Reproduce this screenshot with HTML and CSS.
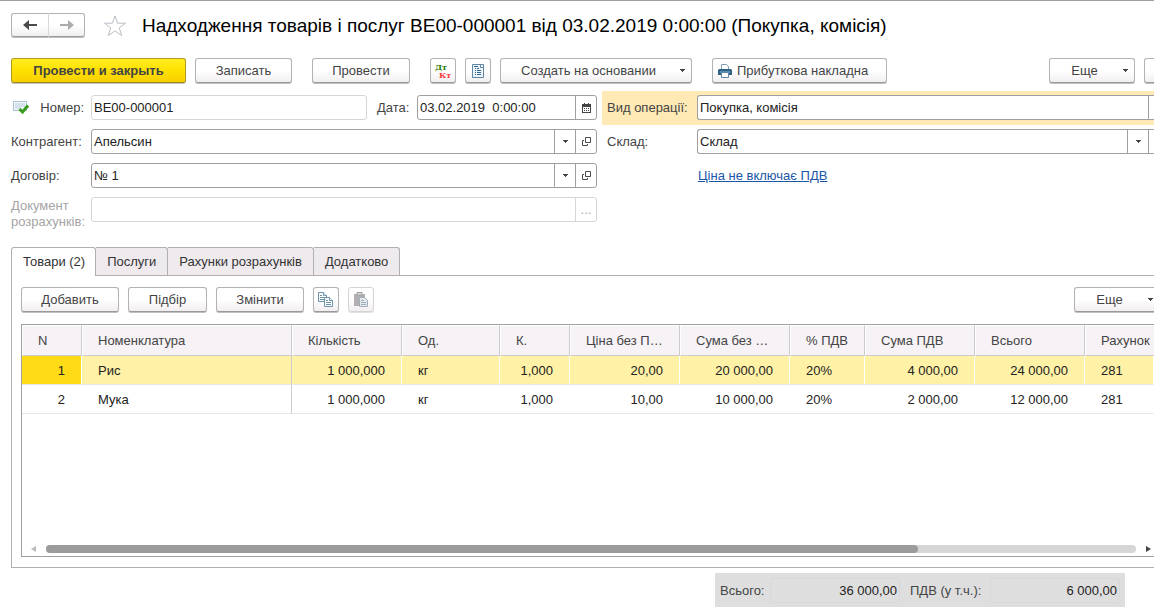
FILE: index.html
```html
<!DOCTYPE html>
<html lang="uk">
<head>
<meta charset="utf-8">
<title>Надходження товарів і послуг</title>
<link rel="stylesheet" href="styles.css">
</head>
<body>
<svg class="defs" aria-hidden="true">
  <symbol id="open" viewBox="0 0 9 9"><path d="M3.500.5h5v5h-5zM2 3.500H.5v5h5V7" fill="none" stroke="#4a4a4a"/></symbol>
  <symbol id="caret" viewBox="0 0 5 3"><path d="M0 0h5v1H4v1H3v1H2V2H1V1H0z" fill="#444"/></symbol>
</svg>
<main class="page">
  <header class="heading">
    <div class="nav">
      <button type="button" class="btn" aria-label="Назад"><svg width="14" height="12" viewBox="0 0 14 12"><path d="M0 6l6-5v4h8v2H6v4z" fill="#4a4a4a"/></svg></button>
      <button type="button" class="btn" aria-label="Вперед"><svg width="14" height="12" viewBox="0 0 14 12"><path d="M14 6L8 1v4H0v2h8v4z" fill="#acacac"/></svg></button>
    </div>
    <svg class="star" width="24" height="24" viewBox="0 0 24 24"><path d="M12 2l2.600 7.200H22.500l-6.200 4.700 2.400 7.600L12 17l-6.700 4.500 2.400-7.600L1.500 9.200h7.900z" fill="none" stroke="#b9bfc6"/></svg>
    <h1>Надходження товарів і послуг ВЕ00-000001 від 03.02.2019 0:00:00 (Покупка, комісія)</h1>
  </header>

  <div class="toolbar">
    <button type="button" class="btn primary">Провести и закрыть</button>
    <button type="button" class="btn w97">Записать</button>
    <button type="button" class="btn w98 apart">Провести</button>
    <button type="button" class="btn icon apart" aria-label="Дт Кт"><svg width="18" height="18" viewBox="0 0 18 18" font-family="DejaVu Serif, serif" font-weight="700" font-size="8"><text x="1" y="8" fill="#1c7a00">Дт</text><text x="5" y="16" fill="#f83c3c">Кт</text></svg></button>
    <button type="button" class="btn icon" aria-label="Звіт"><svg width="12" height="14" viewBox="0 0 12 14"><path d="M.5.5h11v13H.5z" fill="#eef5fa" stroke="#5f87a5"/><path d="M8.500.5v3h3" fill="#fff" stroke="#5f87a5"/><path d="M2 2.500h4M3 4.500h1m1 0h2M3 6.500h1m1 0h4M3 8.500h1m1 0h4M3 10.500h1m1 0h4" stroke="#31658a"/></svg></button>
    <button type="button" class="btn w192 menu"><span>Создать на основании</span><svg width="5" height="3"><use href="#caret"/></svg></button>
    <button type="button" class="btn w175 apart print"><svg width="14" height="14" viewBox="0 0 14 14"><path d="M3.500 5V.5h5l2 2V5" fill="#fff" stroke="#7e9db3"/><path d="M0 6l1-1h12l1 1v5H0z" fill="#2f6487"/><path d="M2 7h10v2H2z" fill="#5b8cad"/><path d="M3.500 8.500h7v5h-7z" fill="#fff" stroke="#5f87a5"/></svg><span>Прибуткова накладна</span></button>
    <button type="button" class="btn w86 menu push"><span>Еще</span><svg width="5" height="3"><use href="#caret"/></svg></button>
    <button type="button" class="btn cut" aria-label="Довідка"></button>
  </div>

  <form class="form">
    <div class="column">
      <div class="row">
        <div class="label posted"><svg width="16" height="14" viewBox="0 0 16 14"><path d="M.5 1.500h13v9H.5z" fill="#f2f7fb" stroke="#a9c0d2"/><path d="M2 4h10M2 6h10M2 8h6" stroke="#b5cddd"/><path d="M6.500 9l3 3L15 5.500" fill="none" stroke="#3a9c1e" stroke-width="3"/></svg><label for="num">Номер:</label></div>
        <div class="field pale grow"><input id="num" value="ВЕ00-000001"></div>
        <label class="datelabel" for="date">Дата:</label>
        <div class="field date"><input id="date" value="03.02.2019  0:00:00"><button type="button" aria-label="Календар"><svg width="9" height="10" viewBox="0 0 9 10"><path d="M0 1h2V0h1v1h3V0h1v1h2v9H0z" fill="#444"/><path d="M1 4h7v5H1z" fill="#fff"/><path d="M2 5.500h1m1 0h1m1 0h1M2 7.500h1m1 0h1m1 0h1" stroke="#444"/></svg></button></div>
      </div>
      <div class="row">
        <label class="label" for="agent">Контрагент:</label>
        <div class="field grow"><input id="agent" value="Апельсин"><button type="button" aria-label="Вибрати"><svg width="5" height="3"><use href="#caret"/></svg></button><button type="button" aria-label="Відкрити"><svg width="9" height="9"><use href="#open"/></svg></button></div>
      </div>
      <div class="row">
        <label class="label" for="contract">Договір:</label>
        <div class="field grow"><input id="contract" value="№ 1"><button type="button" aria-label="Вибрати"><svg width="5" height="3"><use href="#caret"/></svg></button><button type="button" aria-label="Відкрити"><svg width="9" height="9"><use href="#open"/></svg></button></div>
      </div>
      <div class="row tall">
        <label class="label muted" for="doc">Документ розрахунків:</label>
        <div class="field pale grow"><input id="doc" disabled><button type="button" class="dots" disabled>...</button></div>
      </div>
    </div>
    <div class="column">
      <div class="row accent">
        <label class="label" for="kind">Вид операції:</label>
        <div class="field grow open-end"><input id="kind" value="Покупка, комісія"><button type="button" class="sliver" aria-label="Вибрати"></button></div>
      </div>
      <div class="row">
        <label class="label" for="store">Склад:</label>
        <div class="field grow open-end"><input id="store" value="Склад"><button type="button" aria-label="Вибрати"><svg width="5" height="3"><use href="#caret"/></svg></button><button type="button" class="sliver" aria-label="Відкрити"></button></div>
      </div>
      <div class="row linkrow"><a href="#vat">Ціна не включає ПДВ</a></div>
    </div>
  </form>

  <nav class="tabs">
    <button type="button" class="active">Товари (2)</button>
    <button type="button">Послуги</button>
    <button type="button">Рахунки розрахунків</button>
    <button type="button">Додатково</button>
  </nav>

  <section class="panel">
    <div class="toolbar">
      <button type="button" class="btn w98">Добавить</button>
      <button type="button" class="btn w79">Підбір</button>
      <button type="button" class="btn w88">Змінити</button>
      <button type="button" class="btn icon" aria-label="Копіювати"><svg width="16" height="16" viewBox="0 0 16 16"><g fill="#f8fbfd" stroke="#7192a9"><path d="M.5.500h5l3 3v6h-8z"/><path d="M5.500.5v3h3"/><path d="M6.500 5.500h5l3 3v6h-8z"/><path d="M11.500 5.500v3h3"/></g><path d="M2 3.500h2M2 5.500h4M2 7.500h4M8 8.500h2M8 10.500h5M8 12.500h5" stroke="#7192a9"/></svg></button>
      <button type="button" class="btn icon off" aria-label="Вставити" disabled><svg width="16" height="16" viewBox="0 0 16 16"><path d="M1 2h11v12H1z" fill="#b3aeb1"/><path d="M4 .5h5v3H4z" fill="#d3cfcc" stroke="#a5a1a4"/><path d="M6.500 5.500h5l3 3v6h-8z" fill="#e3e9ed" stroke="#9fb0bc"/><path d="M8 8.500h3M8 10.500h5M8 12.500h5" stroke="#9fb0bc"/></svg></button>
      <button type="button" class="btn more menu push"><span>Еще</span><svg width="5" height="3"><use href="#caret"/></svg></button>
    </div>
    <div class="grid">
      <table>
        <colgroup><col class="c60"><col class="c210"><col class="c110"><col class="c98"><col class="c70"><col class="c110"><col class="c110"><col class="c75"><col class="c110"><col class="c110"><col></colgroup>
        <thead><tr><th>N</th><th>Номенклатура</th><th>Кількість</th><th>Од.</th><th>К.</th><th>Ціна без ПДВ</th><th>Сума без ПДВ</th><th>% ПДВ</th><th>Сума ПДВ</th><th>Всього</th><th>Рахунок</th></tr></thead>
        <tbody>
          <tr class="selected"><td class="n">1</td><td>Рис</td><td class="n">1 000,000</td><td>кг</td><td class="n">1,000</td><td class="n">20,00</td><td class="n">20 000,00</td><td>20%</td><td class="n">4 000,00</td><td class="n">24 000,00</td><td>281</td></tr>
          <tr><td class="n">2</td><td>Мука</td><td class="n">1 000,000</td><td>кг</td><td class="n">1,000</td><td class="n">10,00</td><td class="n">10 000,00</td><td>20%</td><td class="n">2 000,00</td><td class="n">12 000,00</td><td>281</td></tr>
        </tbody>
      </table>
      <div class="scroll">
        <svg width="5" height="6" viewBox="0 0 5 6"><path d="M5 0v6L0 3z" fill="#bbb"/></svg>
        <div class="track"><div class="thumb"></div></div>
        <svg width="5" height="6" viewBox="0 0 5 6"><path d="M0 0v6l5-3z" fill="#444"/></svg>
      </div>
    </div>
  </section>

  <footer class="totals">
    <label for="total">Всього:</label><input id="total" value="36 000,00" readonly>
    <label for="vatsum">ПДВ (у т.ч.):</label><input id="vatsum" value="6 000,00" readonly>
  </footer>
</main>
</body>
</html>
```

FILE: styles.css
```css
* { box-sizing: border-box; }
body { margin: 0; overflow: hidden; background: #fff; }
body, button, input { font-family: "Liberation Sans", Arial, sans-serif; font-size: 13px; color: #444; }
svg { display: block; flex: none; }
.defs { position: absolute; width: 0; height: 0; }

.page { display: flex; flex-direction: column; min-height: 100vh; padding: 12px 0 1px 11px; border-top: 1px solid #a0a0a0; }

.btn {
  display: flex; align-items: center; justify-content: center; flex: none;
  height: 25px; margin-bottom: 1px; padding: 0; border: 1px solid #b2b2b2; border-bottom-color: #999; border-radius: 3px;
  box-shadow: 0 1px #c0c0c0;
  background: linear-gradient(#fff 50%, #f2eef1); white-space: nowrap;
}
.heading { display: flex; align-items: flex-start; }
.heading h1 { margin: 0 0 0 15px; font-size: 19px; font-weight: 400; line-height: 26px; color: #000; white-space: nowrap; }
.nav { display: flex; }
.nav .btn { width: 38px; height: 24px; border-radius: 3px 0 0 3px; }
.nav .btn + .btn { width: 36px; border-left: 0; border-radius: 0 3px 3px 0; }
.nav .btn:first-child { border-right-color: #d8d8d8; }
.star { margin: 1px 0 0 18px; }

.toolbar { display: flex; gap: 9px; }
.heading + .toolbar { margin-top: 19px; }
.btn.primary { width: 175px; border-color: #b39a1c; border-bottom-color: #a08a18; background: linear-gradient(#ffee20, #ffe000 50%, #f8cf00); font-weight: 700; }
.w79 { width: 79px; } .w86 { width: 86px; } .w88 { width: 88px; } .w97 { width: 97px; } .w98 { width: 98px; }
.w175 { width: 175px; } .w192 { width: 192px; }
.icon { width: 26px; }
.off { border-color: #d4d4d4; box-shadow: 0 1px #e2e2e2; }
.apart { margin-left: 11px; }
.push { margin-left: auto; }
.menu span { flex: 1; padding-right: 4px; text-align: center; }
.menu svg { margin-right: 6px; }
.print { justify-content: flex-start; gap: 5px; padding-left: 5px; }
.cut { width: 10px; border-right: 0; border-radius: 3px 0 0 3px; }

.form { display: grid; grid-template-columns: minmax(0, 586fr) minmax(0, 552fr); column-gap: 5px; margin-top: 7px; }
.row { display: flex; align-items: center; padding: 4px 0 5px; }
.row.tall { align-items: flex-start; }
.label { flex: none; width: 80px; line-height: 16px; }
.column + .column .label { width: 95px; padding-left: 5px; }
.muted { padding-top: 1px; color: #a5a5a5; }
.posted { display: flex; justify-content: space-between; padding: 0 7px 0 2px; }
.datelabel { width: 50px; padding-left: 10px; }
.accent { background: #ffe9b4; }
.linkrow { padding: 8px 0 0 96px; }
a { color: #1a55a8; line-height: 18px; }

.field { display: flex; height: 25px; border: 1px solid #a0a0a0; border-radius: 3px; background: #fff; overflow: hidden; }
.grow { flex: 1; min-width: 0; }
.date { width: 180px; }
.pale { border-color: #d6d6d6; }
.open-end { border-right: 0; border-radius: 3px 0 0 3px; }
.field input { flex: 1; min-width: 0; padding: 0 2px; border: 0; background: none; color: #222; white-space: pre; }
.field button { display: flex; align-items: center; justify-content: center; width: 21px; padding: 0; border: 0; border-left: 1px solid #a0a0a0; background: none; }
.field .dots { border-color: #d6d6d6; color: #a5a5a5; }
.field .sliver { width: 6px; }

.tabs { display: flex; margin-top: 12px; }
.tabs button { height: 28px; padding: 0 11px; border: 1px solid #b0b0b0; border-left: 0; border-bottom: 0; border-radius: 0 3px 0 0; background: #efeaee; color: #333; }
.tabs .active { height: 29px; margin-bottom: -1px; padding: 0 10px 1px 11px; border-left: 1px solid #b0b0b0; border-radius: 3px 3px 0 0; background: #fff; z-index: 1; }

.panel { display: flex; flex: 1; flex-direction: column; padding: 11px 0 10px 9px; border: 1px solid #b0b0b0; border-right: 0; }
.more { width: 80px; border-right: 0; border-radius: 3px 0 0 3px; }
.more svg { margin-right: 1px; }

.grid { display: flex; flex: 1; flex-direction: column; justify-content: space-between; margin-top: 11px; border: 1px solid #a0a0a0; border-right: 0; overflow: hidden; }
table { width: 100%; table-layout: fixed; border-collapse: separate; border-spacing: 0; }
.c60 { width: 60px; } .c70 { width: 70px; } .c75 { width: 75px; } .c98 { width: 98px; } .c110 { width: 110px; } .c210 { width: 210px; }
th, td { padding: 0 16px 0 15px; overflow: hidden; white-space: nowrap; text-overflow: ellipsis; text-align: left; font-weight: 400; }
th { height: 31px; border: 1px solid #fff; border-right-color: #ccc; border-bottom-color: #ccc; background: #f6f2f6; }
th:last-child { padding-right: 0; border-right: 0; text-overflow: clip; }
td { height: 29px; border-bottom: 1px solid #e6e6e6; border-right: 1px solid transparent; padding-left: 16px; color: #222; }
td:nth-child(2) { border-right-color: #ccc; }
.n { text-align: right; }
.selected td { border-right-color: #fff; background: #fff1a5; background-clip: padding-box; }
.selected td:nth-child(2) { border-right-color: #ccc; }
.selected td:first-child { background-color: #ffda16; }

.scroll { display: flex; align-items: center; gap: 10px; height: 15px; padding: 0 3px 0 9px; }
.track { flex: 1; height: 8px; border-radius: 4px; background: #d6d6d6; }
.thumb { width: 80%; height: 8px; border-radius: 4px; background: #9b9b9b; }

.totals { display: flex; align-items: center; align-self: flex-end; height: 34px; margin: 5px 29px 0 0; padding: 0 5px; background: #dedede; }
.totals input { width: 130px; height: 25px; padding: 0 2px; border: 1px solid #d8d8d8; border-radius: 3px; background: none; color: #222; text-align: right; }
.totals label { width: 50px; }
.totals input + label { width: 90px; padding-left: 10px; }
```
